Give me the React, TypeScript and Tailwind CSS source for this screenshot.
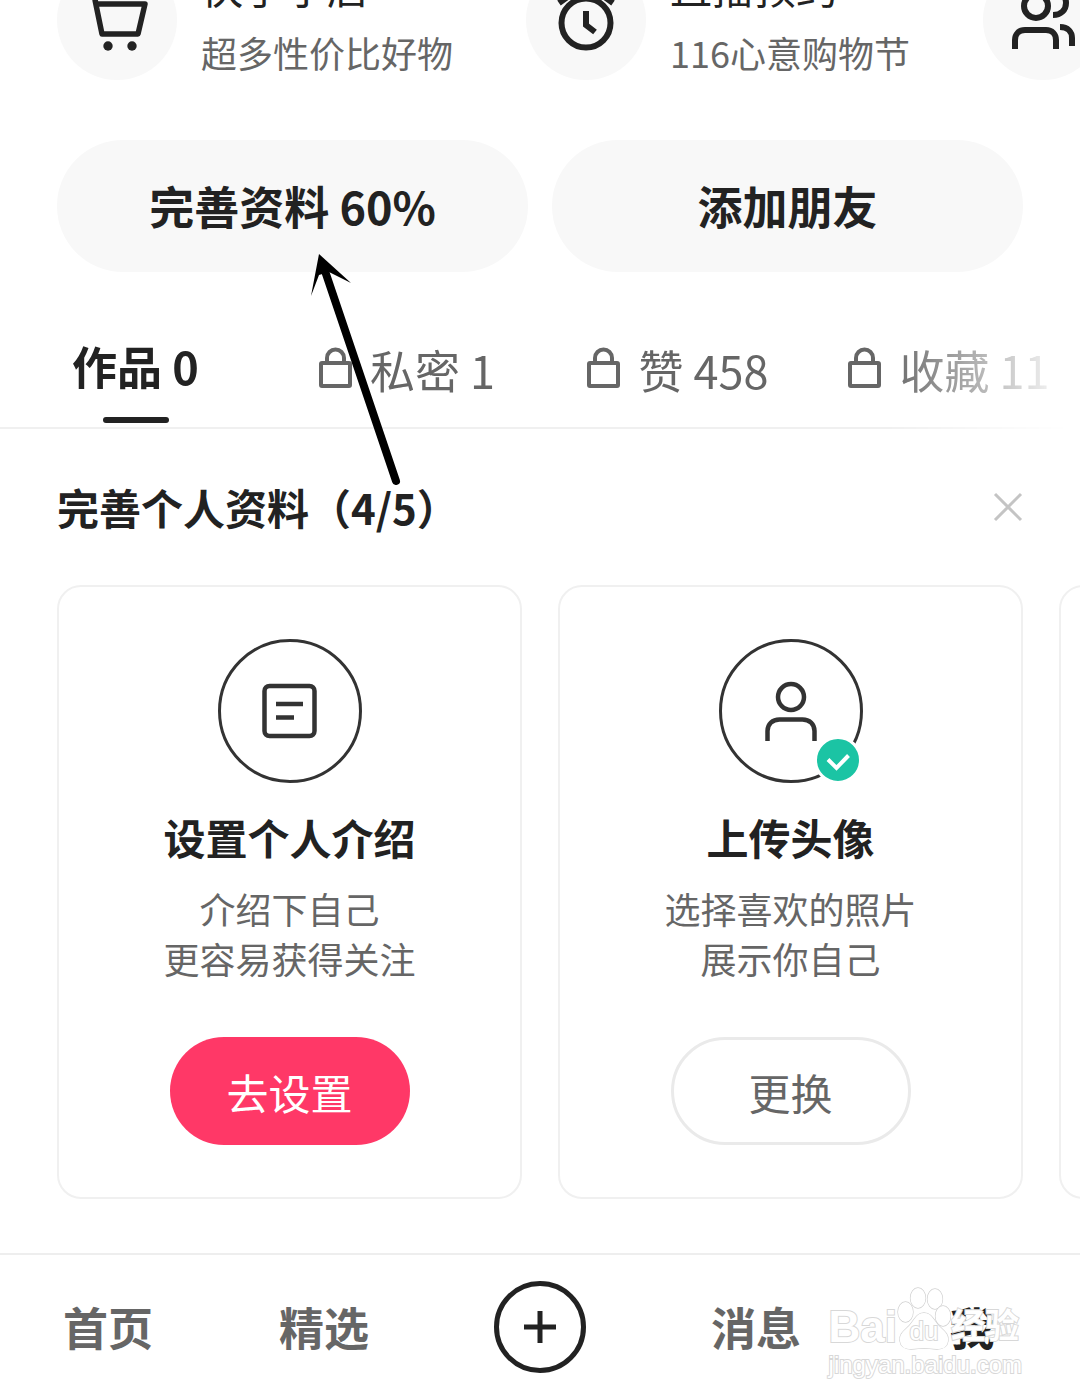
import React from 'react';
import clsx from 'clsx';

const services = [
  { title: '快手小店', desc: '超多性价比好物', icon: <CartIcon /> },
  { title: '直播预约', desc: '116心意购物节', icon: <ClockIcon /> },
  { title: '', desc: '', icon: <FriendsIcon /> },
];

const tabs = [
  { label: '作品', count: 0, locked: false },
  { label: '私密', count: 1, locked: true },
  { label: '赞', count: 458, locked: true },
  { label: '收藏', count: 11, locked: true },
];

function CartIcon() {
  return (
    <svg className="h-[120px] w-[120px]" viewBox="0 0 120 120" fill="none" stroke="#222" strokeWidth="5.500" strokeLinejoin="round">
      <path d="M30 30h6l3 14h49l-7 30H45L38 40" />
      <circle cx="51" cy="86" r="4.700" fill="#222" stroke="none" />
      <circle cx="75" cy="86" r="4.700" fill="#222" stroke="none" />
    </svg>
  );
}

function ClockIcon() {
  return (
    <svg className="h-[120px] w-[120px]" viewBox="0 0 120 120" fill="none" stroke="#222" strokeWidth="6">
      <circle cx="60" cy="63" r="24.500" />
      <path d="M60 51v14l9 7" />
      <path d="M33 43l14-10M87 43L73 33" />
    </svg>
  );
}

function FriendsIcon() {
  return (
    <svg className="h-[120px] w-[120px]" viewBox="0 0 120 120" fill="none" stroke="#222" strokeWidth="6">
      <circle cx="53" cy="46" r="12" />
      <path d="M32 89V80c0-6 4-10 10-10h21c6 0 10 4 10 10v9" />
      <path d="M70 55c8 0 13-5 13-12s-5-12-13-12M77 67c8 0 12 5 12 11v8" />
    </svg>
  );
}

function LockIcon() {
  return (
    <svg className="h-12 w-9 shrink-0" viewBox="0 -3 36 48" fill="none" stroke="currentColor" strokeWidth="4">
      <rect x="3" y="14" width="29" height="23" rx="1" />
      <path d="M9 14V9a8.500 8.500 0 0 1 17 0v5" />
    </svg>
  );
}

function NoteIcon() {
  return (
    <svg className="h-[60px] w-[60px]" viewBox="0 0 60 60" fill="none" stroke="#333" strokeWidth="4.500">
      <rect x="4.500" y="5" width="50" height="50" rx="5" />
      <path d="M16 23h27M16 36.500h18" />
    </svg>
  );
}

function AvatarIcon() {
  return (
    <svg className="h-[60px] w-[60px]" viewBox="0 0 60 60" fill="none" stroke="#333" strokeWidth="4.500">
      <circle cx="30" cy="16" r="13" />
      <path d="M6.500 60V50c0-7 5-11.500 12-11.500h23c7 0 12 4.500 12 11.500v10" />
    </svg>
  );
}

function CheckBadge() {
  return (
    <svg className="absolute -right-0.5 -bottom-1 h-12 w-12" viewBox="0 0 48 48" fill="none">
      <circle cx="24" cy="24" r="22.500" fill="#1bc4a4" stroke="#fff" strokeWidth="3" />
      <path d="M14 23.500l8.500 8.500 12-12.500" stroke="#fff" strokeWidth="4" />
    </svg>
  );
}

interface TaskCardProps {
  icon: React.ReactNode;
  title: string;
  lines: string[];
  action: string;
  done?: boolean;
}

function TaskCard({ icon, title, lines, action, done }: TaskCardProps) {
  return (
    <article className="flex w-[465px] shrink-0 flex-col items-center rounded-3xl border-2 border-[#f0f0f0] px-6 py-[52px]">
      <div className="relative flex h-36 w-36 items-center justify-center rounded-full border-[3px] border-[#333]">
        {icon}
        {done && <CheckBadge />}
      </div>
      <h3 className="mt-6 text-[42px] leading-[60px] font-bold">{title}</h3>
      <p className="mt-4 text-center text-[36px] leading-[50px] text-[#666]">
        {lines.map((line) => (
          <span key={line} className="block">{line}</span>
        ))}
      </p>
      <button
        className={clsx(
          'mt-[54px] h-[108px] w-60 rounded-full text-[42px]',
          done ? 'border-[3px] border-[#eaeaea] text-[#666]' : 'bg-[#ff3867] text-white',
        )}
      >
        {action}
      </button>
    </article>
  );
}

function Watermark() {
  return (
    <div className="pointer-events-none absolute top-7 right-[58px] text-white [paint-order:stroke_fill] [-webkit-text-stroke:2px_#d8d8d8]">
      <div className="flex h-[68px] items-end font-['Liberation_Sans','Noto_Sans_CJK_SC',sans-serif] font-bold">
        <span className="text-[44px] leading-[48px]">Bai</span>
        <span className="relative flex h-[66px] w-[54px] items-end justify-center">
          <svg className="absolute inset-0 h-full w-full" viewBox="0 0 54 66" fill="#fff" stroke="#d0d0d0" strokeWidth="1.300">
            <ellipse cx="8.500" cy="27" rx="7.500" ry="10" />
            <ellipse cx="21" cy="13" rx="7.500" ry="10" />
            <ellipse cx="38" cy="14" rx="7.500" ry="10" />
            <ellipse cx="46" cy="31" rx="7.500" ry="10" />
            <path d="M27 28c-8 0-10 8-15 13S2 49 3 56s6 8 11 8 9-1 13-1 8 1 13 1 10-1 11-8-4-10-9-15-7-13-15-13z" />
          </svg>
          <span className="relative text-[26px] leading-10 font-normal">du</span>
        </span>
        <span className="text-[34px] leading-[50px]">经验</span>
      </div>
      <div className="font-['Liberation_Sans',sans-serif] text-[24px] leading-7">jingyan.baidu.com</div>
    </div>
  );
}

export default function App() {
  return (
    <div className="relative overflow-hidden bg-white font-['Noto_Sans_CJK_SC',sans-serif] text-[#222]">
      <section className="-mt-10 flex gap-[73px] overflow-hidden pl-[57px]">
        {services.map((service, i) => (
          <a key={i} href="#" className="flex shrink-0 items-start gap-6">
            <span className="h-[120px] w-[120px] rounded-full bg-[#f8f8f8]">{service.icon}</span>
            <span className="whitespace-nowrap">
              <span className="block text-[42px] leading-[52px]">{service.title}</span>
              <span className="mt-3 block text-[36px] leading-[56px] text-[#666]">{service.desc}</span>
            </span>
          </a>
        ))}
      </section>

      <div className="mt-[60px] grid grid-cols-2 gap-6 px-[57px]">
        <button className="h-[132px] rounded-full bg-[#f8f8f8] text-[45px] font-bold">完善资料 60%</button>
        <button className="h-[132px] rounded-full bg-[#f8f8f8] text-[45px] font-bold">添加朋友</button>
      </div>

      <nav className="relative mt-10 flex h-[117px] overflow-hidden border-b-2 border-[#f0f0f0] [mask-image:linear-gradient(to_right,#000_82%,transparent_99%)]">
        {tabs.map((tab) => (
          <button
            key={tab.label}
            className={clsx(
              'relative flex w-[271px] shrink-0 items-center justify-center gap-4 text-[45px] whitespace-nowrap',
              tab.locked ? 'text-[#666]' : 'pb-2 font-bold',
            )}
          >
            {tab.locked && <LockIcon />}
            {tab.label} {tab.count}
            {!tab.locked && <span className="absolute bottom-1 h-1.5 w-[66px] rounded-full bg-[#222]" />}
          </button>
        ))}
      </nav>

      <main>
        <header className="mt-12 flex items-center justify-between px-[57px]">
          <h2 className="text-[42px] leading-[60px] font-bold">完善个人资料（4/5）</h2>
          <button aria-label="关闭">
            <svg className="h-[30px] w-[30px]" viewBox="0 0 30 30" stroke="#c4c4c4" strokeWidth="3">
              <path d="M2 2l26 26M28 2L2 28" />
            </svg>
          </button>
        </header>
        <div className="mt-12 flex gap-9 overflow-hidden pl-[57px]">
          <TaskCard icon={<NoteIcon />} title="设置个人介绍" lines={['介绍下自己', '更容易获得关注']} action="去设置" />
          <TaskCard icon={<AvatarIcon />} title="上传头像" lines={['选择喜欢的照片', '展示你自己']} action="更换" done />
          <div className="w-[465px] shrink-0 rounded-3xl border-2 border-[#f0f0f0]" />
        </div>
      </main>

      <footer className="relative mt-[54px] border-t-2 border-[#eee]">
        <nav className="grid h-36 grid-cols-5 items-center text-center text-[45px] font-bold text-[#666]">
          <a href="#">首页</a>
          <a href="#">精选</a>
          <button className="flex h-[92px] w-[92px] items-center justify-center justify-self-center rounded-full border-[5px] border-[#222]" aria-label="发布">
            <svg className="h-8 w-8" viewBox="0 0 32 32" stroke="#222" strokeWidth="5">
              <path d="M16 0v32M0 16h32" />
            </svg>
          </button>
          <a href="#">消息</a>
          <a href="#" className="text-[#222]">我</a>
        </nav>
        <Watermark />
      </footer>

      {/* Pointer towards the profile button */}
      <svg className="pointer-events-none absolute top-[250px] left-[305px] h-60 w-[100px]" viewBox="0 0 100 240">
        <path d="M19 18L91 231" stroke="#000" strokeWidth="8" strokeLinecap="round" />
        <path d="M14 4L46 33L24 22L14 25L6 46z" fill="#000" />
      </svg>
    </div>
  );
}
